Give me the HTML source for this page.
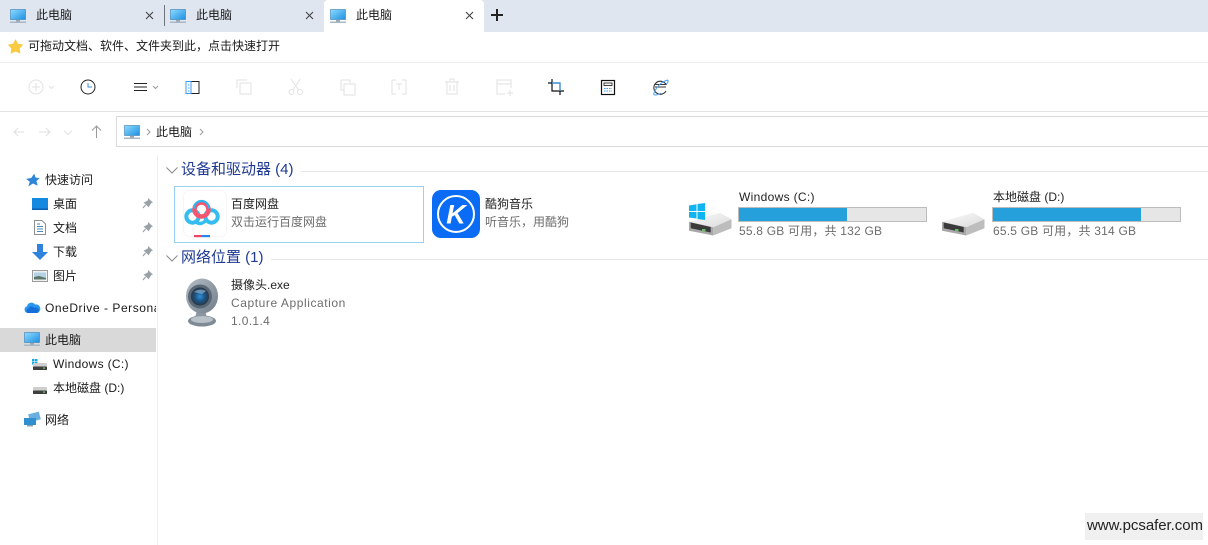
<!DOCTYPE html>
<html lang="zh-CN"><head><meta charset="utf-8"><title>此电脑</title>
<style>
html,body{margin:0;padding:0;background:#fff}
#p{position:relative;width:1208px;height:545px;overflow:hidden;background:#fff;font:12px/16px "Liberation Sans","Noto Sans CJK SC",sans-serif;color:#1a1a1a}
#p div,#p span.t{position:absolute;white-space:nowrap}
svg{position:absolute;overflow:visible}
.g{color:#6d6d6d}
.h{color:#1f3a93;font-size:15px;line-height:18px}
.n{color:#222}
</style></head><body><div id="p">
<svg width="0" height="0"><defs>
<linearGradient id="sc" x1="0" y1="0" x2="1" y2="1"><stop offset="0" stop-color="#8fdcff"/><stop offset="1" stop-color="#1d8fe0"/></linearGradient>
<linearGradient id="top" x1="0" y1="0" x2="1" y2="1"><stop offset="0" stop-color="#fafafa"/><stop offset="1" stop-color="#dcdcdc"/></linearGradient>
<g id="pc"><rect x="0.5" y="0.5" width="15" height="10" fill="url(#sc)" stroke="#3a7fb5" stroke-width=".6"/><rect x="6" y="11" width="4" height="1.5" fill="#9aa8b4"/><rect x="0" y="12.5" width="16" height="1.5" fill="#a9b7c4"/></g>
<g id="x"><path d="M0 0L7 7M7 0L0 7" stroke="#444" stroke-width="1.1" fill="none"/></g>
<g id="pin"><path d="M5 0L10 4.5L8.4 5L6.3 8L6 9.5L.5 4.5L2 4L5 2.2Z" fill="#9aa2a8"/><path d="M2.5 7L0 10" stroke="#9aa2a8" stroke-width="1.2"/></g>
<g id="drive">
<path d="M1 18.700L32 9.700L43.500 16.300L25.300 24.300Z" fill="url(#top)"/>
<path d="M25.300 24.300L43.500 16.300V25.300L25.300 32.500Z" fill="#bdbdbd"/>
<path d="M1 18.700L25.300 24.300V32.500L1 27.700Z" fill="#a8a8a8"/>
<path d="M2.700 19.500L22.700 24V29.500L2.700 25.300Z" fill="#3a3a3a"/>
<rect x="14" y="26" width="3.500" height="2.200" fill="#5fc15f"/></g>
<g id="sd"><rect x="0" y="0" width="14" height="3.500" rx="1" fill="#cfcfcf"/><rect x="0" y="3.500" width="14" height="3.500" rx=".5" fill="#3f3f3f"/><rect x="10" y="4.500" width="2" height="1.200" fill="#6fd06f"/></g>
</defs></svg>

<!-- tab bar -->
<div style="left:0;top:0;width:1208px;height:32px;background:#dfe6f0"></div>
<div style="left:324px;top:0;width:160px;height:32px;background:#fff;border-radius:4px 4px 0 0"></div>
<div style="left:164px;top:5px;width:1px;height:21px;background:#6f7680"></div>
<svg style="left:10px;top:9px" width="16" height="14"><use href="#pc"/></svg>
<svg style="left:170px;top:9px" width="16" height="14"><use href="#pc"/></svg>
<svg style="left:330px;top:9px" width="16" height="14"><use href="#pc"/></svg>
<div style="left:36px;top:7px">此电脑</div>
<div style="left:196px;top:7px">此电脑</div>
<div style="left:356px;top:7px">此电脑</div>
<svg style="left:146px;top:12px" width="7" height="7"><use href="#x"/></svg>
<svg style="left:306px;top:12px" width="7" height="7"><use href="#x"/></svg>
<svg style="left:466px;top:12px" width="7" height="7"><use href="#x"/></svg>
<svg style="left:491px;top:9px" width="12" height="12"><path d="M6 0V12M0 6H12" stroke="#222" stroke-width="2"/></svg>

<!-- favorites -->
<svg style="left:8px;top:39px" width="15" height="15" viewBox="0 0 24 24"><path d="M12 1.500l3.600 6.800 7.400 1.200-5.200 5.500 1.200 7.500L12 19.200l-7 3.300 1.200-7.500L1 9.500l7.400-1.200z" fill="#f9cb42" stroke="#f9cb42" stroke-width="1.500" stroke-linejoin="round"/></svg>
<div style="left:28px;top:38px">可拖动文档、软件、文件夹到此，点击快速打开</div>
<div style="left:0;top:62px;width:1208px;height:1px;background:#eee"></div>

<!-- toolbar -->
<svg style="left:0;top:63px" width="700" height="48" fill="none" stroke-width="1">
<g stroke="#e2e2e2"><circle cx="36" cy="24" r="7"/><path d="M36 20V28M32 24H40"/><path d="M49 23L51.500 25.500L54 23"/></g>
<circle cx="88" cy="24" r="7" stroke="#222"/><path d="M88 20V24H92" stroke="#3b8de0"/>
<path d="M134 20.500H147M134 24H147M134 27.500H147" stroke="#222"/><path d="M153 23L155.500 25.500L158 23" stroke="#999"/>
<rect x="186" y="18.500" width="13" height="12" stroke="#222"/><path d="M186 18.500H191V30.500H186Z" stroke="#3b9bf0"/><path d="M188 22H189.500M188 25H189.500M188 28H189.500" stroke="#3b9bf0"/>
<g stroke="#e2e2e2"><path d="M237 25V17H247M240 20H251V31H240Z"/>
<circle cx="291.500" cy="29" r="2.500"/><circle cx="300" cy="29" r="2.500"/><path d="M293 27L300 16M298.500 27L291 16"/>
<path d="M341 17H350V20M341 17V27H344M344 21H355V32H344Z"/>
<path d="M396 17H392V31H396M402 17H406V31H402M396 21H402M399 21V27"/>
<path d="M445 19H459M450 19V16H454V19M447 19V31H457V19M450 22V28M454 22V28"/>
<path d="M497 27V17H511V25M497 21H511M497 27V31H505M507 30H513M510 27V33"/></g>
<path d="M552 16V28H564M548 20H560V32" stroke="#111" stroke-width="1.200"/><path d="M552 20H560V28" stroke="#3b9bf0" stroke-width="1.200"/>
<rect x="601.500" y="17.500" width="13" height="14" stroke="#111" stroke-width="1.200"/><rect x="604" y="20" width="8" height="2.500" stroke="#111" stroke-width=".8"/><path d="M604 25.500H612M604 28H612" stroke="#3b9bf0" stroke-dasharray="1.500 1"/>
<path d="M666 28A6.500 6.500 0 1 1 666 21.500H655.500M655 24H666" stroke="#333" stroke-width="1.100"/><path d="M653.500 31.500C655 26 661 18 668 17M668 17C668.500 18.500 667.500 20 666.500 21M653.500 31.500C655 32.500 658 32 661 30" stroke="#48a2f5"/>
</svg>
<div style="left:0;top:111px;width:1208px;height:1px;background:#e3e3e3"></div>

<!-- nav -->
<svg style="left:0;top:112px" width="116" height="40" fill="none">
<path d="M24 20H14M18 16L14 20L18 24M39 20H50M46 16L50 20L46 24" stroke="#e0e0e0"/><path d="M64 18.500L68 22.500L72 18.500" stroke="#e0e0e0"/>
<path d="M96.500 26V14M92 18.500L96.500 14L101 18.500" stroke="#9a9a9a"/></svg>
<div style="left:116px;top:116px;width:1100px;height:29px;border:1px solid #d9d9d9"></div>
<svg style="left:124px;top:125px" width="16" height="14"><use href="#pc"/></svg>
<svg style="left:146px;top:128px" width="60" height="8" fill="none" stroke="#9a9a9a"><path d="M1 1L4 4L1 7M54 1L57 4L54 7"/></svg>
<div style="left:156px;top:124px">此电脑</div>

<!-- sidebar -->
<div style="left:157px;top:155px;width:1px;height:390px;background:#f0f0f0"></div>
<div style="left:0;top:328px;width:156px;height:24px;background:#d9d9d9"></div>
<svg style="left:26px;top:173px" width="14" height="14" viewBox="0 0 24 24"><path d="M14 1l2.500 7 7 .8-5.600 5 2 8L12 18 4 23l2.500-8L0 10l9-1.500z" fill="#2f86d8"/></svg>
<div style="left:45px;top:172px">快速访问</div>
<svg style="left:32px;top:198px" width="16" height="13"><rect width="16" height="12" fill="#1489e0"/><rect y="10.500" width="16" height="1.500" fill="#0a5fb0"/></svg>
<div style="left:53px;top:196px">桌面</div>
<svg style="left:34px;top:220px" width="12" height="15"><path d="M.5.5H8L11.500 4V14.500H.5Z" fill="#fff" stroke="#8f8f8f"/><path d="M3 4H6M3 6.500H9M3 9H9M3 11.500H9" stroke="#4a86b8"/></svg>
<div style="left:53px;top:220px">文档</div>
<svg style="left:32px;top:244px" width="16" height="16"><path d="M5 0H11V8H16L8 16L0 8H5Z" fill="#3083dc"/></svg>
<div style="left:53px;top:244px">下载</div>
<svg style="left:32px;top:270px" width="16" height="12"><rect x=".5" y=".5" width="15" height="11" fill="#eef2f5" stroke="#9c9c9c"/><rect x="2" y="2.500" width="12" height="7" fill="#b5d2e4"/><path d="M2 9.500V7L7 6L14 8V9.500Z" fill="#5a7466"/></svg>
<div style="left:53px;top:268px">图片</div>
<svg style="left:143px;top:198px" width="11" height="11"><use href="#pin"/></svg>
<svg style="left:143px;top:222px" width="11" height="11"><use href="#pin"/></svg>
<svg style="left:143px;top:246px" width="11" height="11"><use href="#pin"/></svg>
<svg style="left:143px;top:270px" width="11" height="11"><use href="#pin"/></svg>
<svg style="left:24px;top:302px" width="16" height="11"><path d="M3.500 11A3.500 3.500 0 0 1 3 4.200 4.500 4.500 0 0 1 11 2.500 3.800 3.800 0 0 1 13 11Z" fill="#2a98ee"/><path d="M3.500 11A2.500 2.500 0 0 1 4.500 6.500 3 3 0 0 1 10 6 3 3 0 0 1 13.500 11Z" fill="#1470d8"/></svg>
<div style="left:45px;top:300px;width:111px;overflow:hidden;letter-spacing:.55px">OneDrive - Personal</div>
<svg style="left:24px;top:332px" width="16" height="14"><use href="#pc"/></svg>
<div style="left:45px;top:332px">此电脑</div>
<svg style="left:32px;top:359px" width="16" height="13"><g fill="#18a8e0"><rect x="0" y="0" width="2.500" height="2.500"/><rect x="3" y="0" width="2.500" height="2.500"/><rect x="0" y="3" width="2.500" height="2.500"/><rect x="3" y="3" width="2.500" height="2.500"/></g><g transform="translate(1,4)"><use href="#sd"/></g></svg>
<div style="left:53px;top:356px;letter-spacing:.32px">Windows (C:)</div>
<svg style="left:33px;top:387px" width="14" height="7"><use href="#sd"/></svg>
<div style="left:53px;top:380px">本地磁盘 (D:)</div>
<svg style="left:24px;top:412px" width="16" height="16"><rect x="5" y="1" width="11" height="8" fill="#6aafdf" transform="rotate(-15 10 5)"/><rect x="0" y="6" width="12" height="7" fill="#2f8fd0"/><rect x="3" y="13" width="6" height="1.500" fill="#8aa0b0"/></svg>
<div style="left:45px;top:412px">网络</div>

<!-- groups -->
<svg style="left:166px;top:167px" width="12" height="7" fill="none" stroke="#8a8a8a"><path d="M.5 .5L6 6L11.500 .5"/></svg>
<div class="h" style="left:181px;top:161px">设备和驱动器 (4)</div>
<div style="left:301px;top:171px;width:907px;height:1px;background:#e4e7ec"></div>
<svg style="left:166px;top:255px" width="12" height="7" fill="none" stroke="#8a8a8a"><path d="M.5 .5L6 6L11.500 .5"/></svg>
<div class="h" style="left:181px;top:249px">网络位置 (1)</div>
<div style="left:271px;top:259px;width:937px;height:1px;background:#e4e7ec"></div>

<!-- baidu -->
<div style="left:174px;top:186px;width:248px;height:55px;border:1px solid #99d1f5"></div>
<svg style="left:183px;top:190px" width="44" height="48" fill="none">
<rect x=".5" y=".5" width="43" height="46" rx="6" stroke="#f6f6f6"/>
<circle cx="9.500" cy="26.500" r="6.200" stroke="#35bdf0" stroke-width="4"/><circle cx="28.500" cy="26.500" r="6.200" stroke="#35bdf0" stroke-width="4"/>
<path d="M13 32C17 35 21 33 24 29" stroke="#35bdf0" stroke-width="3.500"/>
<circle cx="18.500" cy="19.500" r="7" stroke="#f5566f" stroke-width="4.500"/><path d="M11 18.500A7.500 7.500 0 0 1 26 18.500" stroke="#2fb4ef" stroke-width="2.200"/>
<rect x="11" y="45" width="8" height="2.200" fill="#f2446a"/><rect x="19" y="45" width="8" height="2.200" fill="#2785ee"/></svg>
<div class="n" style="left:231px;top:196px">百度网盘</div>
<div class="g" style="left:231px;top:214px">双击运行百度网盘</div>

<!-- kugou -->
<div style="left:432px;top:190px;width:48px;height:48px;border-radius:9px;background:#0a6cf5"></div>
<svg style="left:432px;top:190px" width="48" height="48"><circle cx="24" cy="24" r="18" fill="none" stroke="#fff" stroke-width="2"/><text x="24" y="33.500" text-anchor="middle" font-family="Liberation Sans" font-size="27" font-weight="bold" font-style="italic" fill="#fff">K</text></svg>
<div class="n" style="left:485px;top:196px">酷狗音乐</div>
<div class="g" style="left:485px;top:214px">听音乐，用酷狗</div>

<!-- drives -->
<svg style="left:688px;top:203px" width="44" height="34"><use href="#drive"/></svg>
<svg style="left:689px;top:203px" width="17" height="17"><path d="M0 2.500L7.500 1.200V8H0ZM8.500 1L16 0V8H8.500ZM0 9H7.500V15.500L0 14.500ZM8.500 9H16V17L8.500 16Z" fill="#0fb4f0"/></svg>
<svg style="left:941px;top:203px" width="44" height="34"><use href="#drive"/></svg>
<div class="n" style="left:739px;top:189px;letter-spacing:.32px">Windows (C:)</div>
<div style="left:738px;top:207px;width:187px;height:13px;border:1px solid #bcbcbc;background:#e6e6e6"></div>
<div style="left:739px;top:208px;width:108px;height:13px;background:#26a0da"></div>
<div class="g" style="left:739px;top:223px;letter-spacing:.2px">55.8 GB 可用，共 132 GB</div>
<div class="n" style="left:993px;top:189px">本地磁盘 (D:)</div>
<div style="left:992px;top:207px;width:187px;height:13px;border:1px solid #bcbcbc;background:#e6e6e6"></div>
<div style="left:993px;top:208px;width:148px;height:13px;background:#26a0da"></div>
<div class="g" style="left:993px;top:223px;letter-spacing:.2px">65.5 GB 可用，共 314 GB</div>

<!-- webcam -->
<svg style="left:184px;top:278px" width="36" height="50">
<defs><linearGradient id="w" x1="0" y1="0" x2="1" y2="1"><stop offset="0" stop-color="#b4bdc6"/><stop offset="1" stop-color="#6f7c88"/></linearGradient><radialGradient id="l"><stop offset="0" stop-color="#2f8fd6"/><stop offset=".55" stop-color="#1c5486"/><stop offset="1" stop-color="#2a3744"/></radialGradient></defs>
<path d="M13 32L21 32L23 40H11Z" fill="#8d98a3"/>
<ellipse cx="18" cy="43" rx="14" ry="5.500" fill="#7f8a95"/><ellipse cx="18" cy="41.500" rx="11" ry="3.500" fill="#b8c0c8"/>
<ellipse cx="18" cy="18" rx="16" ry="17.500" fill="url(#w)"/>
<circle cx="16" cy="18.500" r="12" fill="#5a6875"/><circle cx="16" cy="18.500" r="9" fill="url(#l)"/><path d="M10 14C13 11 19 11 22 13L18 16Z" fill="#a8c6dc" opacity=".55"/></svg>
<div class="n" style="left:231px;top:277px">摄像头.exe</div>
<div class="g" style="left:231px;top:295px;letter-spacing:.57px">Capture Application</div>
<div class="g" style="left:231px;top:313px;letter-spacing:.35px">1.0.1.4</div>

<!-- watermark -->
<div style="left:1085px;top:513px;width:118px;height:27px;background:#f0f0f0"></div>
<div style="left:1087px;top:518px;font-size:15px;letter-spacing:-.05px;color:#222">www.pcsafer.com</div>
</div></body></html>
